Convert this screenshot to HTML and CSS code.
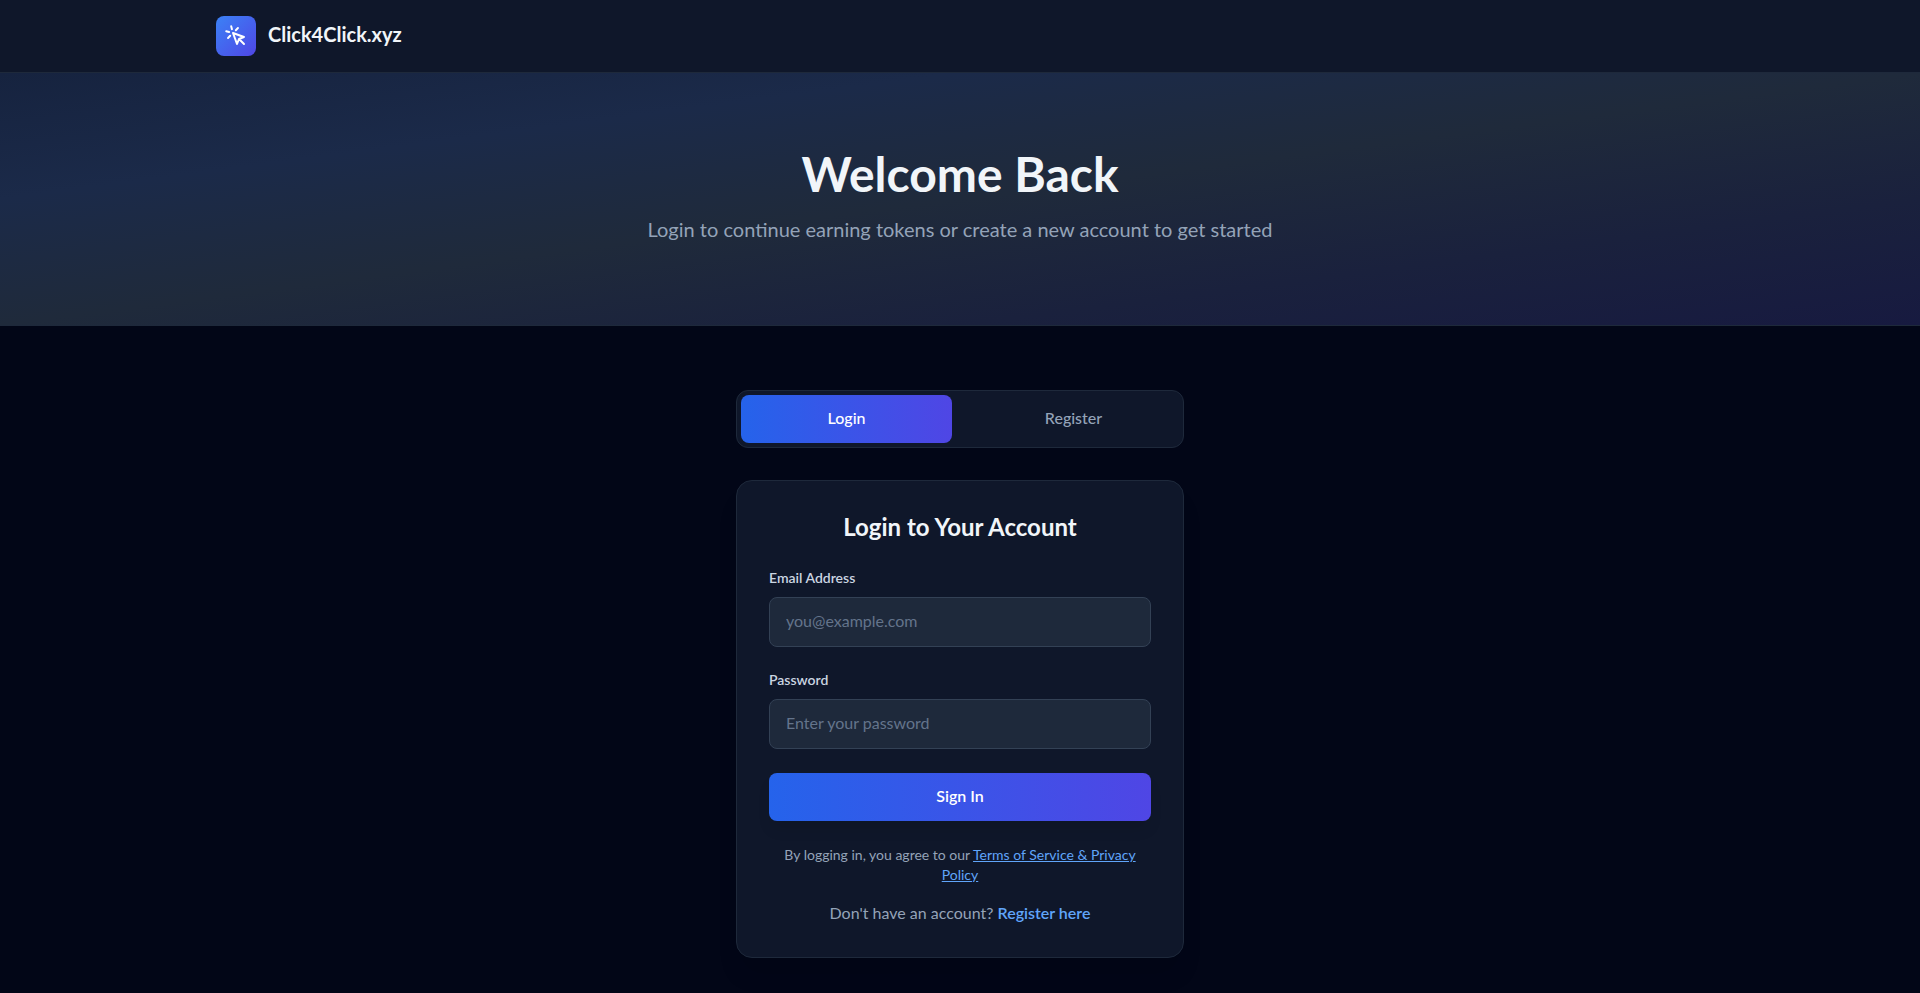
FILE: index.html
```
<!DOCTYPE html>
<html lang="en">
<head>
  <meta charset="UTF-8">
  <meta name="viewport" content="width=device-width, initial-scale=1.0">
  <title>Login - Click4Click.xyz</title>
  <link rel="stylesheet" href="styles.css">
</head>
<body>

<header class="site-header">
  <div class="header-inner">
    <a href="#" class="brand">
      <span class="brand-icon">
        <svg viewBox="0 0 24 24" fill="none" stroke="currentColor" stroke-width="2" stroke-linecap="round" stroke-linejoin="round" aria-hidden="true">
          <path d="M15 15l-2 5L9 9l11 4-5 2zm0 0l5 5M7.188 2.239l.777 2.897M5.136 7.965l-2.898-.777M13.95 4.05l-2.122 2.122m-5.657 5.656l-2.12 2.122"/>
        </svg>
      </span>
      <span class="brand-name">Click4Click.xyz</span>
    </a>
  </div>
</header>

<section class="hero">
  <h1>Welcome Back</h1>
  <p>Login to continue earning tokens or create a new account to get started</p>
</section>

<main class="container">
  <!-- Login / Register switch -->
  <div class="tabs">
    <button type="button" class="tab active">Login</button>
    <button type="button" class="tab">Register</button>
  </div>

  <!-- Login form -->
  <div class="card">
    <h2>Login to Your Account</h2>
    <form class="login-form">
      <div class="form-group">
        <label for="email">Email Address</label>
        <input type="email" id="email" placeholder="you@example.com">
      </div>
      <div class="form-group">
        <label for="password">Password</label>
        <input type="password" id="password" placeholder="Enter your password">
      </div>
      <button type="submit" class="submit-btn">Sign In</button>
      <p class="terms">By logging in, you agree to our <a href="#">Terms of Service &amp; Privacy Policy</a></p>
    </form>
    <p class="switch">Don't have an account? <a href="#">Register here</a></p>
  </div>
</main>

</body>
</html>
```
FILE: styles.css
```
* {
  box-sizing: border-box;
  margin: 0;
  padding: 0;
}
body {
  min-height: 100vh;
  background: #020617;
  color: #f1f5f9;
  font-family: Lato, sans-serif;
  font-size: 16px;
  line-height: 24px;
}
button, input {
  font: inherit;
}
a {
  color: #60a5fa;
}

/* Header */
.site-header {
  background: #0f172a;
  border-bottom: 1px solid #1e293b;
}
.header-inner {
  max-width: 1536px;
  margin: 0 auto;
  padding: 16px 24px;
}
.brand {
  display: inline-flex;
  vertical-align: top;
  gap: 12px;
  color: #f1f5f9;
  text-decoration: none;
}
.brand-icon {
  display: flex;
  align-items: center;
  justify-content: center;
  width: 40px;
  height: 40px;
  border-radius: 8px;
  color: #fff;
  background: linear-gradient(to bottom right, #3b82f6, #4f46e5);
}
.brand-icon svg {
  width: 24px;
  height: 24px;
}
.brand-name {
  font-size: 20px;
  line-height: 36px;
  font-weight: 700;
}

/* Hero */
.hero {
  padding: 80px 24px;
  text-align: center;
  background: linear-gradient(to bottom right, #16233f, #1b2a49 25%, #1f2a3b 50%, #1a213d 75%, #171a40);
  border-bottom: 1px solid #1e293b;
}
.hero h1 {
  margin-bottom: 20px;
  font-size: 48px;
  line-height: 42px;
  font-weight: 700;
}
.hero p {
  padding-bottom: 2px;
  color: #94a3b8;
  font-size: 20px;
  line-height: 28px;
}

/* Tabs and card */
.container {
  max-width: 496px;
  margin: 0 auto;
  padding: 64px 24px 32px;
}
.tabs {
  display: grid;
  grid-template-columns: 1fr 1fr;
  gap: 16px;
  margin-bottom: 32px;
  padding: 4px;
  background: #0f172a;
  border: 1px solid #1e293b;
  border-radius: 12px;
}
.tab {
  padding: 11px 24px 13px;
  border: none;
  border-radius: 8px;
  background: none;
  color: #94a3b8;
  font-weight: 500;
  cursor: pointer;
}
.tab.active {
  color: #fff;
  background: linear-gradient(to right, #2563eb, #4f46e5);
}
.card {
  padding: 32px;
  background: #0f172a;
  border: 1px solid #1e293b;
  border-radius: 16px;
  box-shadow: 0 20px 25px -5px rgba(0, 0, 0, 0.1);
}
.card h2 {
  margin-bottom: 28px;
  font-size: 24px;
  line-height: 28px;
  font-weight: 700;
  text-align: center;
}
.login-form {
  display: flex;
  flex-direction: column;
  gap: 24px;
}
.form-group label {
  display: block;
  margin-bottom: 10px;
  color: #cbd5e1;
  font-size: 14px;
  line-height: 18px;
  font-weight: 600;
}
.form-group input {
  display: block;
  width: 100%;
  padding: 11px 16px 13px;
  line-height: 24px;
  background: #1e293b;
  border: 1px solid #334155;
  border-radius: 8px;
  color: #f1f5f9;
}
.form-group input::placeholder {
  color: #64748b;
}
.submit-btn {
  padding: 11px 24px 13px;
  border: none;
  border-radius: 8px;
  color: #fff;
  font-weight: 600;
  background: linear-gradient(to right, #2563eb, #4f46e5);
  box-shadow: 0 10px 15px -3px rgba(0, 0, 0, 0.1);
  cursor: pointer;
}
.terms {
  color: #94a3b8;
  font-size: 14px;
  line-height: 20px;
  text-align: center;
}
.switch {
  margin-top: 16px;
  color: #94a3b8;
  text-align: center;
}
.switch a {
  font-weight: 600;
  text-decoration: none;
}
```
